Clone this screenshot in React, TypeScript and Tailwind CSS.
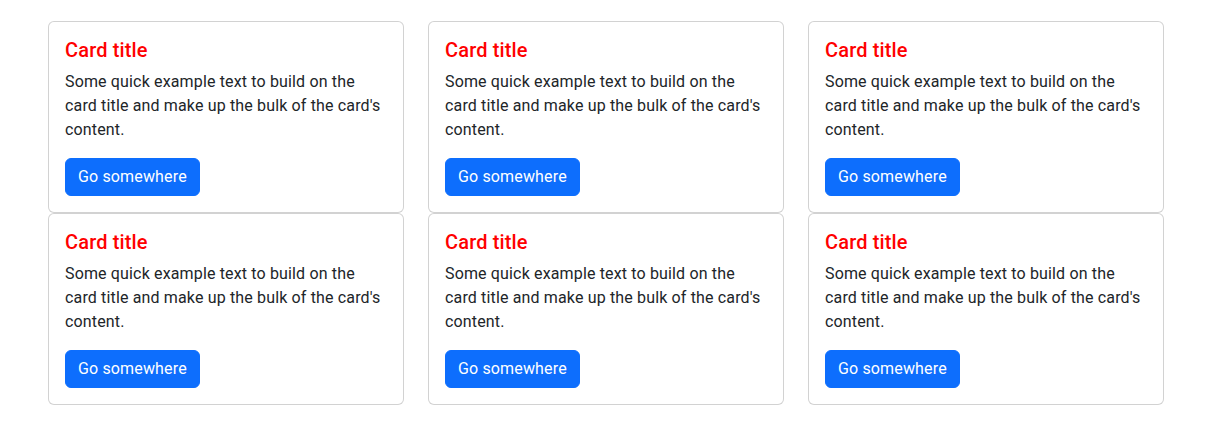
export default function App() {
  const cards = Array.from({ length: 6 });
  return (
    <div className="min-h-[439px] bg-white pt-[21px] pl-[48px] tracking-[0.15px]" style={{ fontFamily: "Roboto, 'Liberation Sans', sans-serif" }}>
      <div className="grid grid-cols-[356px_356px_356px] gap-x-[24px] gap-y-0">
        {cards.map((_, i) => (
          <div key={i} className="rounded-[6px] border border-[rgba(0,0,0,0.175)] bg-white p-4">
            <h5 className="mb-2 text-[20px] font-medium leading-[24px] text-[#ff0000]">Card title</h5>
            <p className="mb-4 text-[16px] leading-[24px] text-[#212529]">
              Some quick example text to build on the card title and make up the bulk of the card's content.
            </p>
            <button className="rounded-[6px] border border-[#0d6efd] bg-[#0d6efd] px-3 py-[6px] text-[16px] leading-[24px] text-white">
              Go somewhere
            </button>
          </div>
        ))}
      </div>
    </div>
  );
}
